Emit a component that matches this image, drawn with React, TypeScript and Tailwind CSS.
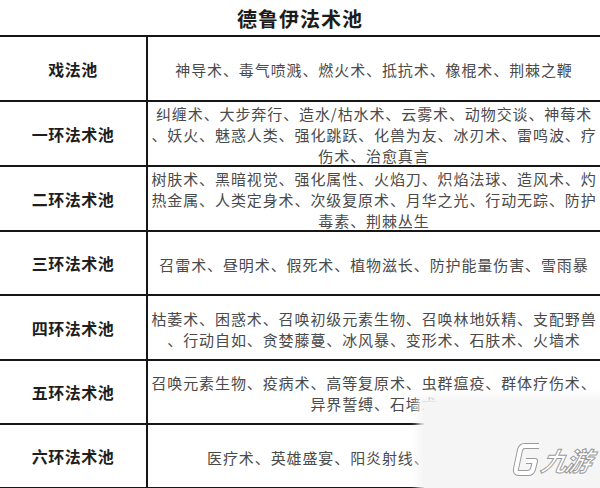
type PoolRow = {
  label: string;
  height: string;
  lines: string[];
};

const rows: PoolRow[] = [
  {
    label: "戏法池",
    height: "h-[65px]",
    lines: ["神导术、毒气喷溅、燃火术、抵抗术、橡棍术、荆棘之鞭"],
  },
  {
    label: "一环法术池",
    height: "h-[65px]",
    lines: [
      "纠缠术、大步奔行、造水/枯水术、云雾术、动物交谈、神莓术",
      "、妖火、魅惑人类、强化跳跃、化兽为友、冰刃术、雷鸣波、疗",
      "伤术、治愈真言",
    ],
  },
  {
    label: "二环法术池",
    height: "h-[65px]",
    lines: [
      "树肤术、黑暗视觉、强化属性、火焰刀、炽焰法球、造风术、灼",
      "热金属、人类定身术、次级复原术、月华之光、行动无踪、防护",
      "毒素、荆棘丛生",
    ],
  },
  {
    label: "三环法术池",
    height: "h-[64px]",
    lines: ["召雷术、昼明术、假死术、植物滋长、防护能量伤害、雪雨暴"],
  },
  {
    label: "四环法术池",
    height: "h-[65px]",
    lines: [
      "枯萎术、困惑术、召唤初级元素生物、召唤林地妖精、支配野兽",
      "、行动自如、贪婪藤蔓、冰风暴、变形术、石肤术、火墙术",
    ],
  },
  {
    label: "五环法术池",
    height: "h-[64px]",
    lines: [
      "召唤元素生物、疫病术、高等复原术、虫群瘟疫、群体疗伤术、",
      "异界誓缚、石墙术",
    ],
  },
  {
    label: "六环法术池",
    height: "h-[64px]",
    lines: ["医疗术、英雄盛宴、阳炎射线、移土术、荆棘墙"],
  },
];

const logoPath = "M27 5 H13 Q9 5 8 9 L4 28 Q3 32 7 32 H16 Q20 32 21 28 L23 20 H14";

// site watermark that sits over the bottom-right corner
function Watermark() {
  return (
    <div className="pointer-events-none absolute left-[424px] top-[402px] h-[86px] w-[176px] bg-[#f5f5f5] shadow-[0_0_8px_6px_#f5f5f5]">
      <div className="absolute left-[88px] top-[39px] flex items-center">
        <svg width="30" height="38" viewBox="0 0 30 38" fill="none">
          <path d={logoPath} stroke="#9a9a9a" strokeWidth="6" strokeLinejoin="round" />
          <path d={logoPath} stroke="#ffffff" strokeWidth="4" strokeLinejoin="round" />
        </svg>
        <span className="-skew-x-12 text-[26px] leading-none font-bold italic tracking-[-2px] text-white [-webkit-text-stroke:1px_#9a9a9a]">
          九游
        </span>
      </div>
    </div>
  );
}

export default function App() {
  return (
    <div className="relative h-[488px] w-[600px] overflow-hidden bg-white [font-family:'Noto_Sans_CJK_SC','Noto_Sans',sans-serif]">
      <div className="flex h-[35px] items-center justify-center pt-[2px] text-[20px] font-bold tracking-[1px] text-[#1c1c1c]">
        德鲁伊法术池
      </div>
      <div className="border-t-2 border-[#161616]">
        {rows.map((row) => (
          <div key={row.label} className={`flex border-b-2 border-[#161616] ${row.height}`}>
            <div className="flex w-[148px] shrink-0 items-center justify-center border-r-2 border-[#161616] text-[16px] font-bold tracking-[0.5px] text-[#1e1e1e]">
              {row.label}
            </div>
            <div className="flex flex-1 flex-col items-center justify-center pt-[2px] text-center text-[15px] leading-[21px] tracking-[0.9px] text-[#4a4a4a]">
              {row.lines.map((line) => (
                <span key={line} className="block whitespace-nowrap">
                  {line}
                </span>
              ))}
            </div>
          </div>
        ))}
      </div>
      <Watermark />
    </div>
  );
}
